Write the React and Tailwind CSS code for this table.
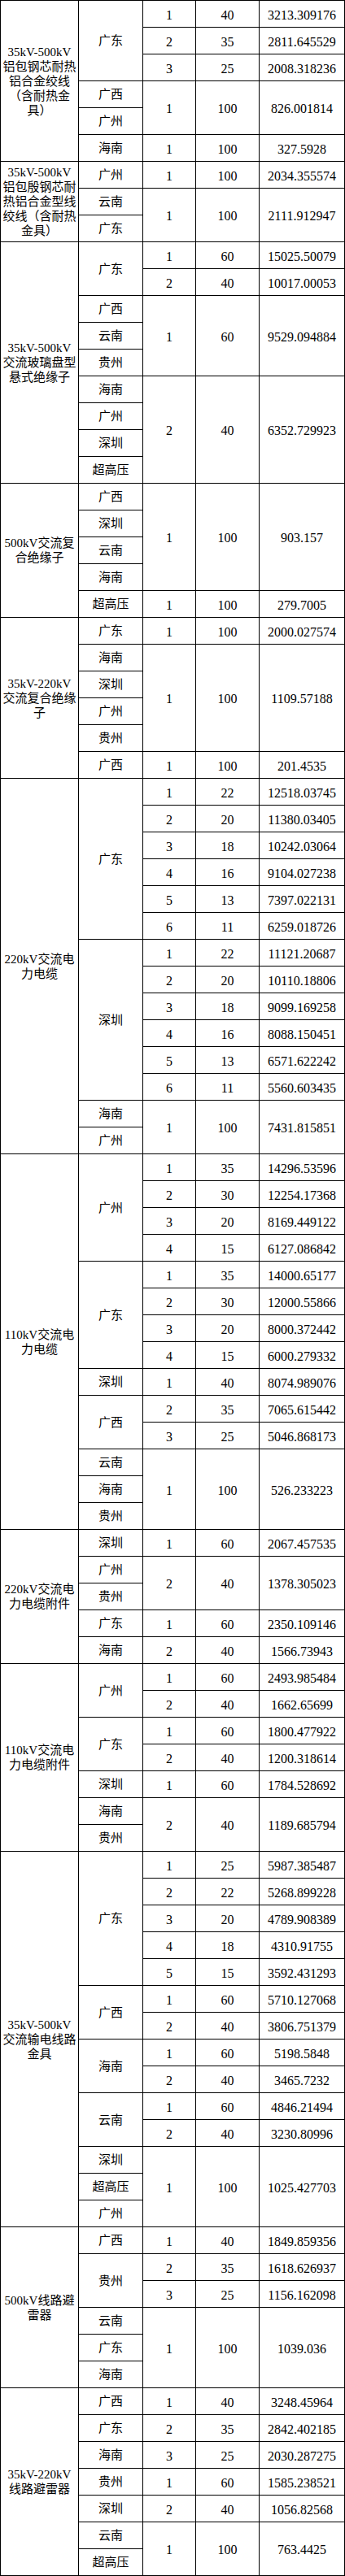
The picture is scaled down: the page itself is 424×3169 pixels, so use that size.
const groups = [
  {
    name: ["35kV-500kV", "铝包钢芯耐热", "铝合金绞线", "（含耐热金", "具）"],
    parts: [
      { regions: ["广东"], items: [["1", "40", "3213.309176"], ["2", "35", "2811.645529"], ["3", "25", "2008.318236"]] },
      { regions: ["广西", "广州"], items: [["1", "100", "826.001814"]] },
      { regions: ["海南"], items: [["1", "100", "327.5928"]] },
    ],
  },
  {
    name: ["35kV-500kV", "铝包殷钢芯耐", "热铝合金型线", "绞线（含耐热", "金具）"],
    parts: [
      { regions: ["广州"], items: [["1", "100", "2034.355574"]] },
      { regions: ["云南", "广东"], items: [["1", "100", "2111.912947"]] },
    ],
  },
  {
    name: ["35kV-500kV", "交流玻璃盘型", "悬式绝缘子"],
    parts: [
      { regions: ["广东"], items: [["1", "60", "15025.50079"], ["2", "40", "10017.00053"]] },
      { regions: ["广西", "云南", "贵州"], items: [["1", "60", "9529.094884"]] },
      { regions: ["海南", "广州", "深圳", "超高压"], items: [["2", "40", "6352.729923"]] },
    ],
  },
  {
    name: ["500kV交流复", "合绝缘子"],
    parts: [
      { regions: ["广西", "深圳", "云南", "海南"], items: [["1", "100", "903.157"]] },
      { regions: ["超高压"], items: [["1", "100", "279.7005"]] },
    ],
  },
  {
    name: ["35kV-220kV", "交流复合绝缘", "子"],
    parts: [
      { regions: ["广东"], items: [["1", "100", "2000.027574"]] },
      { regions: ["海南", "深圳", "广州", "贵州"], items: [["1", "100", "1109.57188"]] },
      { regions: ["广西"], items: [["1", "100", "201.4535"]] },
    ],
  },
  {
    name: ["220kV交流电", "力电缆"],
    parts: [
      {
        regions: ["广东"],
        items: [
          ["1", "22", "12518.03745"],
          ["2", "20", "11380.03405"],
          ["3", "18", "10242.03064"],
          ["4", "16", "9104.027238"],
          ["5", "13", "7397.022131"],
          ["6", "11", "6259.018726"],
        ],
      },
      {
        regions: ["深圳"],
        items: [
          ["1", "22", "11121.20687"],
          ["2", "20", "10110.18806"],
          ["3", "18", "9099.169258"],
          ["4", "16", "8088.150451"],
          ["5", "13", "6571.622242"],
          ["6", "11", "5560.603435"],
        ],
      },
      { regions: ["海南", "广州"], items: [["1", "100", "7431.815851"]] },
    ],
  },
  {
    name: ["110kV交流电", "力电缆"],
    parts: [
      {
        regions: ["广州"],
        items: [
          ["1", "35", "14296.53596"],
          ["2", "30", "12254.17368"],
          ["3", "20", "8169.449122"],
          ["4", "15", "6127.086842"],
        ],
      },
      {
        regions: ["广东"],
        items: [
          ["1", "35", "14000.65177"],
          ["2", "30", "12000.55866"],
          ["3", "20", "8000.372442"],
          ["4", "15", "6000.279332"],
        ],
      },
      { regions: ["深圳"], items: [["1", "40", "8074.989076"]] },
      { regions: ["广西"], items: [["2", "35", "7065.615442"], ["3", "25", "5046.868173"]] },
      { regions: ["云南", "海南", "贵州"], items: [["1", "100", "526.233223"]] },
    ],
  },
  {
    name: ["220kV交流电", "力电缆附件"],
    parts: [
      { regions: ["深圳"], items: [["1", "60", "2067.457535"]] },
      { regions: ["广州", "贵州"], items: [["2", "40", "1378.305023"]] },
      { regions: ["广东"], items: [["1", "60", "2350.109146"]] },
      { regions: ["海南"], items: [["2", "40", "1566.73943"]] },
    ],
  },
  {
    name: ["110kV交流电", "力电缆附件"],
    parts: [
      { regions: ["广州"], items: [["1", "60", "2493.985484"], ["2", "40", "1662.65699"]] },
      { regions: ["广东"], items: [["1", "60", "1800.477922"], ["2", "40", "1200.318614"]] },
      { regions: ["深圳"], items: [["1", "60", "1784.528692"]] },
      { regions: ["海南", "贵州"], items: [["2", "40", "1189.685794"]] },
    ],
  },
  {
    name: ["35kV-500kV", "交流输电线路", "金具"],
    parts: [
      {
        regions: ["广东"],
        items: [
          ["1", "25", "5987.385487"],
          ["2", "22", "5268.899228"],
          ["3", "20", "4789.908389"],
          ["4", "18", "4310.91755"],
          ["5", "15", "3592.431293"],
        ],
      },
      { regions: ["广西"], items: [["1", "60", "5710.127068"], ["2", "40", "3806.751379"]] },
      { regions: ["海南"], items: [["1", "60", "5198.5848"], ["2", "40", "3465.7232"]] },
      { regions: ["云南"], items: [["1", "60", "4846.21494"], ["2", "40", "3230.80996"]] },
      { regions: ["深圳", "超高压", "广州"], items: [["1", "100", "1025.427703"]] },
    ],
  },
  {
    name: ["500kV线路避", "雷器"],
    parts: [
      { regions: ["广西"], items: [["1", "40", "1849.859356"]] },
      { regions: ["贵州"], items: [["2", "35", "1618.626937"], ["3", "25", "1156.162098"]] },
      { regions: ["云南", "广东", "海南"], items: [["1", "100", "1039.036"]] },
    ],
  },
  {
    name: ["35kV-220kV", "线路避雷器"],
    parts: [
      { regions: ["广西"], items: [["1", "40", "3248.45964"]] },
      { regions: ["广东"], items: [["2", "35", "2842.402185"]] },
      { regions: ["海南"], items: [["3", "25", "2030.287275"]] },
      { regions: ["贵州"], items: [["1", "60", "1585.238521"]] },
      { regions: ["深圳"], items: [["2", "40", "1056.82568"]] },
      { regions: ["云南", "超高压"], items: [["1", "100", "763.4425"]] },
    ],
  },
];

const partRows = (p) => Math.max(p.regions.length, p.items.length);

const buildRows = () => {
  const rows = [];
  groups.forEach((g, gi) => {
    const total = g.parts.reduce((s, p) => s + partRows(p), 0);
    g.parts.forEach((p, pi) => {
      const n = partRows(p);
      for (let i = 0; i < n; i++) {
        const cells = [];
        if (pi === 0 && i === 0) {
          cells.push(
            <td key="name" rowSpan={total} className="bg-white p-0 text-center align-middle text-[15px] leading-[18px]">
              {g.name.map((line) => (
                <div key={line}>{line}</div>
              ))}
            </td>
          );
        }
        // region: one per row, or one spanning the whole part
        if (p.regions.length > 1) {
          cells.push(
            <td key="region" className="bg-white p-0 pt-[1px] text-center align-middle text-[15px]">
              {p.regions[i]}
            </td>
          );
        } else if (i === 0) {
          cells.push(
            <td key="region" rowSpan={n} className="bg-white p-0 pt-[1px] text-center align-middle text-[15px]">
              {p.regions[0]}
            </td>
          );
        }
        const item = p.items.length > 1 ? p.items[i] : i === 0 ? p.items[0] : null;
        const span = p.items.length > 1 ? 1 : n;
        if (item) {
          item.forEach((v, k) =>
            cells.push(
              <td key={"v" + k} rowSpan={span} className="bg-white p-0 pt-[3px] text-center align-middle text-[16px]">
                {v}
              </td>
            )
          );
        }
        rows.push(
          <tr key={gi + "-" + pi + "-" + i} className="h-8">
            {cells}
          </tr>
        );
      }
    });
  });
  return rows;
};

export default function App() {
  return (
    <div className="w-[424px] bg-white text-black font-['Liberation_Serif','Noto_Sans_CJK_SC',serif]">
      <table className="w-[424px] table-fixed border-separate border-spacing-[1px] bg-black">
        <colgroup>
          <col className="w-[95px]" />
          <col className="w-[78px]" />
          <col className="w-[64px]" />
          <col className="w-[77px]" />
          <col className="w-[104px]" />
        </colgroup>
        <tbody>{buildRows()}</tbody>
      </table>
    </div>
  );
}
